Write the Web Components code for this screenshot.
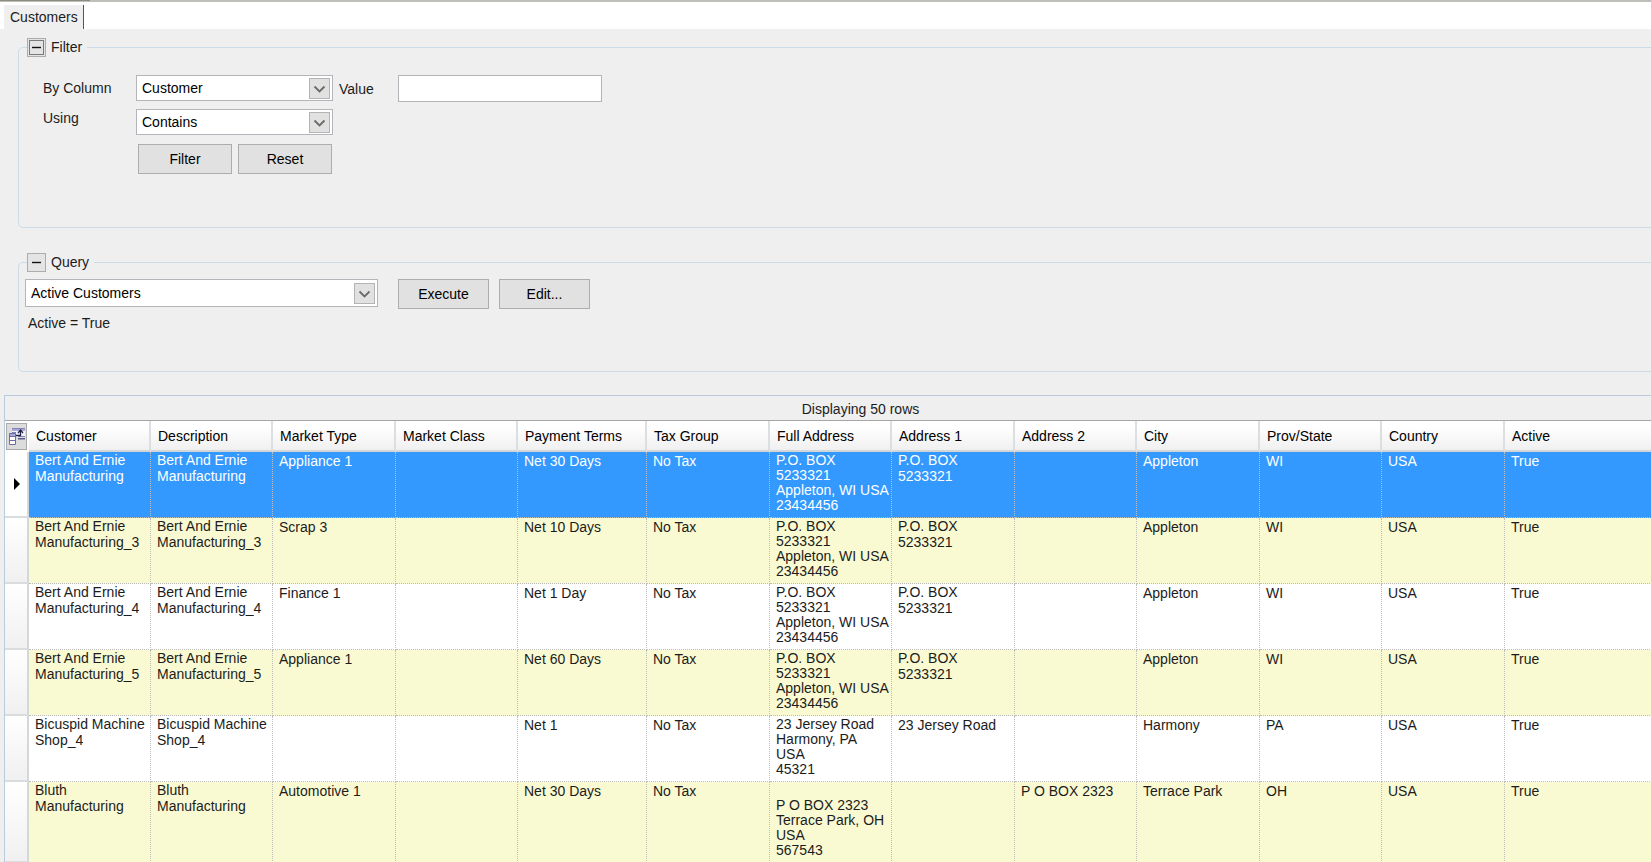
<!DOCTYPE html>
<html lang="en"><head><meta charset="utf-8"><title>Customers</title>
<style>
html,body{margin:0;height:100%}
body{background:#efefef;overflow:hidden;font:14px/16px "Liberation Sans",Arial,sans-serif;color:#1c1c1c}
</style></head><body>
<customers-page></customers-page>
<script>
const define = (name, html, setup) => customElements.define(name, class extends HTMLElement {
  constructor() {
    super();
    const t = document.createElement('template');
    t.innerHTML = html;
    this.attachShadow({mode: 'open'}).append(t.content.cloneNode(true));
  }
  connectedCallback() { if (setup && !this.ready) { this.ready = true; setup(this, this.shadowRoot); } }
});

define('tab-strip', `<style>
:host{display:flex;background:#fff;border-top:2px solid #bebeba;height:27px;box-sizing:content-box;position:relative}
:host::before{content:"";position:absolute;left:0;top:-2px;width:90px;height:1px;background:#8d8c80}
button{margin:3px 0 0 4px;padding:0 8px 0 6px;border:0;border-right:1px solid #555;background:#efefef;font:inherit;color:inherit;height:24px;width:80px;text-align:left}
</style><button role="tab" aria-selected="true"><slot></slot></button>`);

define('push-button', `<style>
:host{display:block}
button{width:100%;height:30px;padding:0;border:1px solid #adadad;background:#e1e1e1;font:inherit;color:#000}
</style><button type="button"><slot></slot></button>`);

define('drop-down', `<style>
:host{display:block}
label{display:grid;grid-template-columns:1fr auto;align-items:center}
select{grid-area:1/1/2/3;appearance:none;width:100%;height:var(--h,26px);box-sizing:border-box;margin:0;padding:0 24px 0 5px;border:1px solid #b4b5bb;border-radius:0;background:#fff;font:inherit;color:#000}
svg{grid-area:1/2;margin-right:3px;pointer-events:none;box-sizing:border-box;width:21px;height:21px;background:#e1e1e1;border:1px solid #b4b4b4}
</style><label><select></select><svg viewBox="0 0 19 19"><path d="M4.500 7.500l5 5 5-5" fill="none" stroke="#6a6a6a" stroke-width="1.800"/></svg></label>`,
(el, root) => {
  const s = root.querySelector('select');
  s.setAttribute('aria-label', el.getAttribute('label'));
  s.add(new Option(el.getAttribute('value')));
});

define('group-panel', `<style>
:host{display:block}
fieldset{margin:0 -8px 0 18px;padding:0;border:1px solid #cbdce8;border-radius:5px;min-width:0;box-sizing:border-box;height:var(--panel-height)}
legend{display:flex;align-items:center;gap:5px;padding:0 5px 0 0;margin-left:8px;height:20px}
button{width:19px;height:19px;padding:0;border:1px solid #adadad;background:#e4e4e4;display:grid;place-items:center}
svg{display:block}
.focus{display:none}
:host([focused]) .focus{display:inline}
</style><fieldset><legend><button type="button" aria-label="Collapse"><svg width="17" height="17" viewBox="0 0 17 17"><path d="M4 8.500h9" stroke="#111" stroke-width="1.400"/><rect class="focus" x="1.500" y="1.500" width="14" height="14" fill="none" stroke="#111" stroke-dasharray="1 1"/></svg></button><slot name="title"></slot></legend><slot></slot></fieldset>`);

define('filter-form', `<style>
:host{display:grid;grid-template-columns:93px 197px 65px 204px;row-gap:7px;align-items:start;padding:18px 0 0 24px}
span{line-height:26px}
.using{line-height:18px}
label{padding:2px 0 0 6px;line-height:25px}
input{width:100%;height:27px;margin:0;box-sizing:border-box;border:1px solid #b4b5bb;border-radius:0;padding:0 4px;font:inherit;background:#fff}
.actions{grid-column:2/3;display:grid;grid-template-columns:1fr 1fr;gap:6px;padding:2px 1px 0 2px}
</style>
<span>By Column</span><drop-down label="By Column" value="Customer"></drop-down><label for="v">Value</label><input id="v" type="text">
<span class="using">Using</span><drop-down label="Using" value="Contains"></drop-down>
<div class="actions"><push-button>Filter</push-button><push-button>Reset</push-button></div>`);

define('query-form', `<style>
:host{display:block;padding:7px 0 0 6px}
.row{display:grid;grid-template-columns:353px 192px;column-gap:20px;--h:28px}
.actions{display:grid;grid-template-columns:91px 91px;gap:10px}
p{margin:6px 0 0 3px}
</style><div class="row"><drop-down label="Query" value="Active Customers"></drop-down><div class="actions"><push-button>Execute</push-button><push-button>Edit...</push-button></div></div><p>Active = True</p>`);

const heads = ['Customer','Description','Market Type','Market Class','Payment Terms','Tax Group','Full Address','Address 1','Address 2','City','Prov/State','Country','Active'];
const widths = [122,122,123,122,129,123,122,123,122,123,122,123];
const bert = (suffix, market, terms) => {
  const name = 'Bert And Ernie\nManufacturing' + suffix;
  return [name, name, market, '', terms, 'No Tax', 'P.O. BOX\n5233321\nAppleton, WI USA\n23434456', 'P.O. BOX\n5233321', '', 'Appleton', 'WI', 'USA', 'True'];
};
const rows = [
  bert('', 'Appliance 1', 'Net 30 Days'),
  bert('_3', 'Scrap 3', 'Net 10 Days'),
  bert('_4', 'Finance 1', 'Net 1 Day'),
  bert('_5', 'Appliance 1', 'Net 60 Days'),
  ['Bicuspid Machine\nShop_4','Bicuspid Machine\nShop_4','','','Net 1','No Tax','23 Jersey Road\nHarmony, PA\nUSA\n45321','23 Jersey Road','','Harmony','PA','USA','True'],
  ['Bluth\nManufacturing','Bluth\nManufacturing','Automotive 1','','Net 30 Days','No Tax','\nP O BOX 2323\nTerrace Park, OH\nUSA\n567543','','P O BOX 2323','Terrace Park','OH','USA','True']
];
const kind = text => ['single', 'pair'][text.split('\n').length - 1] || 'block';

define('data-grid', `<style>
:host{display:block;margin:0 -65px 0 4px;border:solid #b9cbdd;border-width:1px 0 0 1px;background:#fff}
table{width:100%;table-layout:fixed;border-collapse:separate;border-spacing:0}
caption{height:24px;line-height:26px;background:#efefef;border-bottom:1px solid #a6a6a6;text-align:center}
thead th{box-sizing:border-box;height:31px;padding:0 0 0 7px;text-align:left;font-weight:400;color:#000;background:linear-gradient(#fff 20%,#f0f0f0);border-right:2px solid #dcdfdf;border-bottom:2px solid #d2d6d6}
thead th:last-child{border-right:0}
thead th:first-child{padding:0;border:0;background:#fff}
.chooser{display:grid;place-items:center;width:21px;height:27px;margin:0 0 0 1px;padding:0;border:1px solid #aaa;background:#dcdcdc}
tbody th{padding:0;background:linear-gradient(#fff,#f0f0f0);border-right:2px solid #d4d8da;border-bottom:2px solid #dadddd;box-sizing:border-box}
tbody th svg{display:block;margin-left:8px}
td{box-sizing:border-box;height:66px;padding:1px 0 0 6px;vertical-align:top;line-height:15px;white-space:pre;border-right:1px dotted #bdbdbd;border-bottom:1px dotted #bdbdbd}
td.single{padding-top:2px}
td.pair{line-height:16px;padding-top:0}
td:last-child{border-right:0}
tbody tr:nth-child(even) td{background:#fafad2}
tbody tr.selected td{background:#3399ff;color:#fff}
tbody tr.selected th{background:#fff}
tbody tr:last-child td{height:81px}
</style><table><caption>Displaying 50 rows</caption><colgroup></colgroup><thead><tr></tr></thead><tbody></tbody></table>`,
(el, root) => {
  root.querySelector('colgroup').innerHTML = '<col style="width:24px">' + widths.map(w => `<col style="width:${w}px">`).join('') + '<col>';
  root.querySelector('thead tr').innerHTML = `<th><button class="chooser" type="button" aria-label="Choose columns"><svg width="17" height="19" viewBox="0 0 17 19"><path d="M4 1h13v3H4z" fill="#a9a9d6"/><path d="M4 4h13v6H4z" fill="#f4f4fc"/><path d="M4 1.500h13M10 9.500h7M4 5.500h4" stroke="#8484b4"/><path d="M10 11h7v1.500h-7z" fill="#5a5a92"/><path d="M1 6h7v3H1z" fill="#a9a9d6"/><path d="M1 9h7v9H1z" fill="#fff"/><path d="M1.500 6.500h6v11h-6zM1.500 9.500h6M1.500 13.500h6" fill="none" stroke="#6c6ca4"/><path d="M8 8.500h4.500V4M10 6l2.500-3L15 6" fill="none" stroke="#22224e" stroke-width="1.300"/></svg></button></th>` + heads.map(h => `<th scope="col">${h}</th>`).join('');
  root.querySelector('tbody').innerHTML = rows.map((r, i) => `<tr${i ? '' : ' class="selected"'}><th>${i ? '' : '<svg width="8" height="12" viewBox="0 0 8 12"><path d="M1 0l6 6-6 6z"/></svg>'}</th>` + r.map(c => `<td class="${kind(c)}">${c}</td>`).join('') + '</tr>').join('');
});

define('customers-page', `<style>
:host{display:flex;flex-direction:column}
.filter{margin-top:8px;--panel-height:191px}
.query{margin-top:24px;--panel-height:120px}
data-grid{margin-top:23px}
</style>
<tab-strip>Customers</tab-strip>
<group-panel class="filter" focused><span slot="title">Filter</span><filter-form></filter-form></group-panel>
<group-panel class="query"><span slot="title">Query</span><query-form></query-form></group-panel>
<data-grid></data-grid>`);
</script></body></html>
